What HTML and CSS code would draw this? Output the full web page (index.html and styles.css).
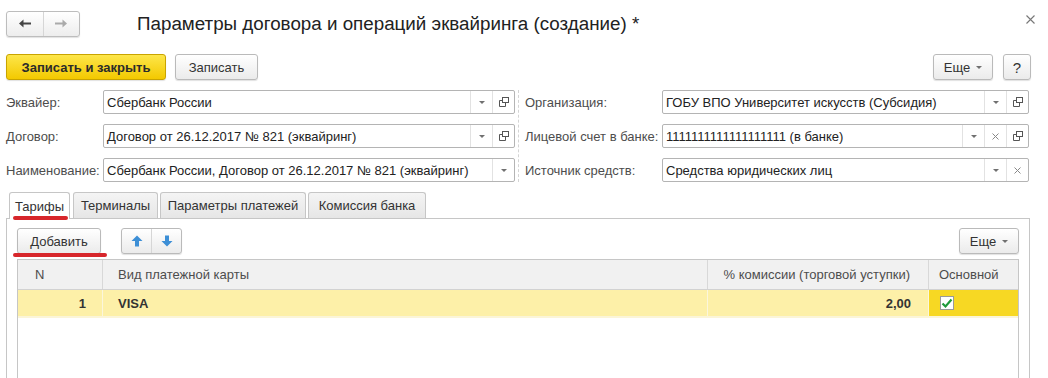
FILE: index.html
```html
<!DOCTYPE html>
<html lang="ru">
<head>
<meta charset="utf-8">
<title>Параметры договора и операций эквайринга</title>
<link rel="stylesheet" href="styles.css">
</head>
<body>
<div class="header">
  <div class="nav">
    <div class="nav-btn"><svg width="12" height="9" viewBox="0 0 12 9"><path d="M3 4.5H12" stroke="#444" stroke-width="2"/><polygon points="0,4.5 4.5,0.5 4.5,8.5" fill="#444"/></svg></div>
    <div class="nav-btn"><svg width="12" height="9" viewBox="0 0 12 9"><path d="M0 4.5H9" stroke="#aaa" stroke-width="2"/><polygon points="12,4.5 7.5,0.5 7.5,8.5" fill="#aaa"/></svg></div>
  </div>
  <div class="title">Параметры договора и операций эквайринга (создание) *</div>
  <div class="close"><svg width="9" height="9" viewBox="0 0 9 9"><path d="M0.5 0.5L8.5 8.5M8.5 0.5L0.5 8.5" stroke="#777" stroke-width="1.1"/></svg></div>
</div>

<div class="cmdbar">
  <div class="btn btn-yellow">Записать и закрыть</div>
  <div class="btn btn-save">Записать</div>
  <div class="spacer"></div>
  <div class="btn btn-more">Еще <span class="tri"></span></div>
  <div class="btn btn-help">?</div>
</div>

<div class="fields">
  <div class="col col-left">
    <div class="row"><div class="label">Эквайер:</div>
      <div class="box"><div class="val">Сбербанк России</div><div class="ib"><span class="tri"></span></div><div class="ib"><svg width="10" height="10" viewBox="0 0 10 10"><rect x="3.5" y="0.5" width="6" height="5" fill="none" stroke="#555"/><path d="M3.5 3.5H0.5V9.5H6.5V5.5" fill="none" stroke="#555"/></svg></div></div></div>
    <div class="row"><div class="label">Договор:</div>
      <div class="box"><div class="val">Договор от 26.12.2017 № 821 (эквайринг)</div><div class="ib"><span class="tri"></span></div><div class="ib"><svg width="10" height="10" viewBox="0 0 10 10"><rect x="3.5" y="0.5" width="6" height="5" fill="none" stroke="#555"/><path d="M3.5 3.5H0.5V9.5H6.5V5.5" fill="none" stroke="#555"/></svg></div></div></div>
    <div class="row"><div class="label">Наименование:</div>
      <div class="box"><div class="val">Сбербанк России, Договор от 26.12.2017 № 821 (эквайринг)</div><div class="ib"><span class="tri"></span></div></div></div>
  </div>
  <div class="sep"></div>
  <div class="col col-right">
    <div class="row"><div class="label">Организация:</div>
      <div class="box"><div class="val">ГОБУ ВПО Университет искусств (Субсидия)</div><div class="ib"><span class="tri"></span></div><div class="ib"><svg width="10" height="10" viewBox="0 0 10 10"><rect x="3.5" y="0.5" width="6" height="5" fill="none" stroke="#555"/><path d="M3.5 3.5H0.5V9.5H6.5V5.5" fill="none" stroke="#555"/></svg></div></div></div>
    <div class="row"><div class="label">Лицевой счет в банке:</div>
      <div class="box"><div class="val">1111111111111111111 (в банке)</div><div class="ib"><span class="tri"></span></div><div class="ib"><svg width="7" height="7" viewBox="0 0 7 7"><path d="M0.5 0.5L6.5 6.5M6.5 0.5L0.5 6.5" stroke="#888" stroke-width="1"/></svg></div><div class="ib"><svg width="10" height="10" viewBox="0 0 10 10"><rect x="3.5" y="0.5" width="6" height="5" fill="none" stroke="#555"/><path d="M3.5 3.5H0.5V9.5H6.5V5.5" fill="none" stroke="#555"/></svg></div></div></div>
    <div class="row"><div class="label">Источник средств:</div>
      <div class="box"><div class="val">Средства юридических лиц</div><div class="ib"><span class="tri"></span></div><div class="ib"><svg width="7" height="7" viewBox="0 0 7 7"><path d="M0.5 0.5L6.5 6.5M6.5 0.5L0.5 6.5" stroke="#888" stroke-width="1"/></svg></div></div></div>
  </div>
</div>

<div class="tabs">
  <div class="tab active t1">Тарифы</div>
  <div class="tab t2">Терминалы</div>
  <div class="tab t3">Параметры платежей</div>
  <div class="tab t4">Комиссия банка</div>
</div>
<div class="panel">
  <div class="toolbar">
    <div class="btn btn-add">Добавить</div>
    <div class="updown">
      <div class="ud"><svg width="12" height="12" viewBox="0 0 12 12"><polygon points="6,0.5 11.5,6 8,6 8,11.5 4,11.5 4,6 0.5,6" fill="#3d8fd6"/></svg></div>
      <div class="ud"><svg width="12" height="12" viewBox="0 0 12 12"><polygon points="6,11.5 11.5,6 8,6 8,0.5 4,0.5 4,6 0.5,6" fill="#3d8fd6"/></svg></div>
    </div>
    <div class="spacer"></div>
    <div class="btn btn-more2">Еще <span class="tri"></span></div>
  </div>
  <div class="grid">
    <div class="thead">
      <div class="c cn">N</div>
      <div class="c cv">Вид платежной карты</div>
      <div class="c cp">% комиссии (торговой уступки)</div>
      <div class="c co">Основной</div>
    </div>
    <div class="trow">
      <div class="c cn num">1</div>
      <div class="c cv bold">VISA</div>
      <div class="c cp num">2,00</div>
      <div class="c co main"><span class="chk"><svg width="12" height="11" viewBox="0 0 12 11"><path d="M1.5 5.5L4.5 8.5L10.5 1.5" fill="none" stroke="#1f9a3a" stroke-width="2.2"/></svg></span></div>
    </div>
  </div>
</div>

<div class="mark mark-tab"></div>
<div class="mark mark-add"></div>
</body>
</html>
```
FILE: styles.css
```css
* { box-sizing: border-box; }
html, body { margin: 0; }
body {
  font-family: "Liberation Sans", Arial, sans-serif;
  font-size: 13px;
  color: #333;
  background: #fff;
  width: 1048px;
  height: 378px;
  overflow: hidden;
  position: relative;
}
.header {
  display: flex;
  align-items: center;
  height: 40px;
  padding: 7px 0 0 6px;
}
.nav {
  display: flex;
  width: 74px;
  height: 26px;
  border: 1px solid #bdbdbd;
  border-radius: 3px;
  background: linear-gradient(#ffffff, #ededed);
  box-shadow: 0 1px 1px rgba(0,0,0,0.12);
}
.nav-btn { flex: 1; display: flex; align-items: center; justify-content: center; }
.nav-btn + .nav-btn { border-left: 1px solid #d6d6d6; }
.title {
  margin-left: 57px;
  font-size: 18.8px;
  color: #222;
  white-space: nowrap;
}
.close { margin-left: auto; margin-right: 13px; margin-top: -8px; display: flex; }

.cmdbar {
  display: flex;
  align-items: center;
  margin-top: 14px;
  padding: 0 17px 0 6px;
  height: 26px;
}
.spacer { flex: 1; }
.btn {
  height: 26px;
  border: 1px solid #bababa;
  border-radius: 3px;
  background: linear-gradient(#ffffff, #ebebeb);
  box-shadow: 0 1px 1px rgba(0,0,0,0.12);
  display: flex;
  align-items: center;
  justify-content: center;
  color: #333;
  white-space: nowrap;
}
.btn-yellow {
  width: 160px;
  font-weight: bold;
  border-color: #c9a400;
  background: linear-gradient(#fde64a, #f3c900);
  color: #2b2b2b;
}
.btn-save { width: 83px; margin-left: 9px; }
.btn-more { width: 60px; }
.btn-help { width: 28px; margin-left: 10px; font-size: 15px; }
.tri {
  display: inline-block;
  width: 0; height: 0;
  border-left: 3px solid transparent;
  border-right: 3px solid transparent;
  border-top: 3px solid #707070;
  margin-left: 6px;
}
.ib .tri { margin-left: 0; }

.fields {
  display: flex;
  margin-top: 10px;
  padding-left: 6px;
}
.col { display: flex; flex-direction: column; gap: 10px; }
.col-left { width: 509px; }
.col-right { width: 504px; }
.sep { width: 1px; margin: 0 6px 0 3px; border-left: 1px dashed #d4d4d4; }
.row { display: flex; align-items: center; height: 24px; }
.label { width: 97px; color: #4d4d4d; white-space: nowrap; }
.col-right .label { width: 137px; }
.box {
  flex: 1;
  height: 24px;
  border: 1px solid #b4b4b4;
  border-radius: 2px;
  display: flex;
  background: #fff;
}
.val {
  flex: 1;
  padding-left: 3px;
  display: flex;
  align-items: center;
  white-space: nowrap;
  overflow: hidden;
  color: #222;
}
.ib {
  width: 22px;
  border-left: 1px solid #e2e2e2;
  display: flex;
  align-items: center;
  justify-content: center;
}

.tabs {
  display: flex;
  gap: 2px;
  margin: 10px 0 -1px 9px;
  height: 27px;
  position: relative;
  z-index: 1;
}
.tab {
  height: 26px;
  border: 1px solid #c6c6c6;
  border-bottom: none;
  border-radius: 3px 3px 0 0;
  background: linear-gradient(#f4f4f4, #e6e6e6);
  display: flex;
  align-items: center;
  justify-content: center;
  color: #333;
  white-space: nowrap;
}
.tab.active { background: #fff; height: 27px; }
.t1 { width: 61px; margin-right: 1px; }
.t2 { width: 85px; }
.t3 { width: 146px; }
.t4 { width: 118px; }

.panel {
  margin-left: 6px;
  width: 1024px;
  height: 170px;
  border: 1px solid #c6c6c6;
  border-bottom: none;
  padding: 9px 10px 0 10px;
}
.toolbar { display: flex; align-items: center; height: 26px; }
.btn-add { width: 84px; }
.updown {
  display: flex;
  margin-left: 20px;
  width: 61px;
  height: 26px;
  border: 1px solid #bababa;
  border-radius: 3px;
  background: linear-gradient(#ffffff, #ebebeb);
  box-shadow: 0 1px 1px rgba(0,0,0,0.12);
}
.ud { flex: 1; display: flex; align-items: center; justify-content: center; }
.ud + .ud { border-left: 1px solid #d6d6d6; }
.btn-more2 { width: 60px; }

.grid {
  margin-top: 5px;
  width: 1002px;
  height: 130px;
  border: 1px solid #c6c6c6;
  border-bottom: none;
}
.thead { display: flex; height: 30px; background: #f1f1f1; border-bottom: 1px solid #d2d2d2; }
.trow { display: flex; height: 28px; background: #fdf0a8; border-bottom: 2px solid #fbf5d8; }
.c { display: flex; align-items: center; white-space: nowrap; }
.thead .c { color: #4d4d4d; }
.thead .c + .c { border-left: 1px solid #d8d8d8; }
.trow .c + .c { border-left: 1px solid #fbf6dc; }
.cn { width: 84px; padding-left: 17px; }
.cv { width: 605px; padding-left: 15px; }
.cp { width: 221px; justify-content: flex-end; padding-right: 18px; }
.co { flex: 1; padding-left: 10px; }
.trow .num { justify-content: flex-end; padding-right: 16px; padding-left: 0; font-weight: bold; color: #333; }
.trow .cp { padding-right: 17px; }
.bold { font-weight: bold; color: #333; }
.main { background: #f7d823; }
.chk {
  width: 14px; height: 14px;
  margin-left: 1px;
  border: 1px solid #9a9a9a;
  background: #fff;
  display: flex;
  align-items: center;
  justify-content: center;
}

.mark {
  position: absolute;
  z-index: 5;
  height: 4px;
  background: #d7262b;
  border-radius: 2px;
}
.mark-tab { left: 13px; top: 216px; width: 55px; }
.mark-add { left: 13px; top: 253px; width: 94px; }
```
